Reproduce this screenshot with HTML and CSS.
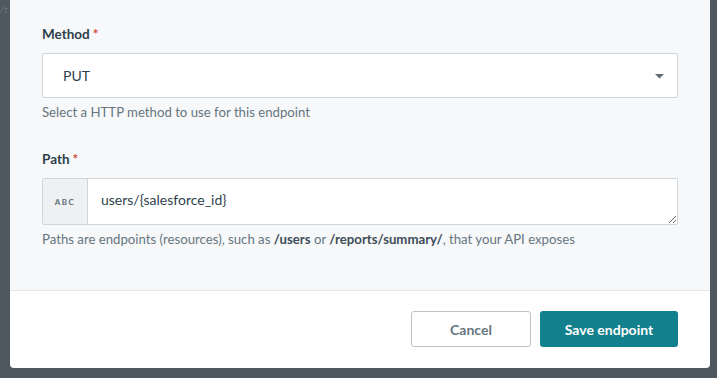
FILE: index.html
```html
<!DOCTYPE html>
<html lang="en">
  <head>
    <meta charset="UTF-8" />
    <meta name="viewport" content="width=device-width, initial-scale=1.0" />
    <title>Edit endpoint</title>
    <link rel="stylesheet" href="styles.css">
  </head>

  <body>
    <div class="backdrop">
      <div class="behind">/t</div>
      <div class="modal">
        <div class="modal_body">
          <div class="field">
            <label class="field_label">Method<span class="req">*</span></label>
            <div class="select_box">
              <span>PUT</span>
              <svg class="caret" width="9" height="5" viewBox="0 0 9 5">
                <path d="M0 0 H9 L4.5 4.5 Z" fill="#5d6b76" />
              </svg>
            </div>
            <div class="hint">Select a HTTP method to use for this endpoint</div>
          </div>

          <div class="field">
            <label class="field_label">Path<span class="req">*</span></label>
            <div class="input_group">
              <div class="addon">ABC</div>
              <textarea class="path_input" rows="1">users/{salesforce_id}</textarea>
            </div>
            <div class="hint">
              Paths are endpoints (resources), such as <b>/users</b> or
              <b>/reports/summary/</b>, that your API exposes
            </div>
          </div>
        </div>

        <div class="modal_footer">
          <button class="btn btn_cancel">Cancel</button>
          <button class="btn btn_save">Save endpoint</button>
        </div>
      </div>
    </div>
  </body>
</html>
```

FILE: styles.css
```css
html,
body {
  width: 100%;
  height: 100%;
  margin: 0;
  padding: 0;
  font-family: Lato, "Liberation Sans", sans-serif;
  background-color: #4f585e;
  overflow: hidden;
}

.backdrop {
  display: flex;
  height: 378px;
  padding: 0 7px 10px 10px;
  box-sizing: border-box;
  position: relative;
}

.behind {
  position: absolute;
  top: 3px;
  left: 0;
  color: #6d767c;
  font-size: 10px;
  font-style: italic;
}

.modal {
  width: 700px;
  display: flex;
  flex-direction: column;
  background-color: #fff;
  border-radius: 0 0 4px 4px;
  overflow: hidden;
  z-index: 1;
}

.modal_body {
  height: 291px;
  box-sizing: border-box;
  padding: 26px 32px 0;
  background-color: #f7f8fa;
  border-bottom: 1px solid #e3e6e9;
}

.field {
  margin-bottom: 31px;
}

.field_label {
  display: block;
  font-size: 13.5px;
  font-weight: 700;
  color: #2e3f4b;
  margin-bottom: 11px;
}

.req {
  color: #d2483a;
  margin-left: 3px;
}

.select_box {
  height: 45px;
  box-sizing: border-box;
  display: flex;
  align-items: center;
  justify-content: space-between;
  padding: 0 13px 0 20px;
  background-color: #fff;
  border: 1px solid #d0d5da;
  border-radius: 2px;
  font-size: 14px;
  color: #2e3f4b;
}

.caret {
  margin-top: 1px;
}

.hint {
  margin-top: 6px;
  font-size: 13.2px;
  color: #66767f;
}

.hint b {
  color: #3e4e59;
}

.input_group {
  display: flex;
  height: 45px;
  border: 1px solid #d0d5da;
  border-radius: 2px;
  background-color: #fff;
  overflow: hidden;
}

.addon {
  width: 44px;
  flex: none;
  display: flex;
  align-items: center;
  justify-content: center;
  background-color: #eef0f2;
  border-right: 1px solid #d0d5da;
  font-size: 8px;
  font-weight: 700;
  letter-spacing: 1.5px;
  color: #5d6b76;
}

.path_input {
  flex: 1;
  border: none;
  outline: none;
  resize: vertical;
  margin: 0;
  padding: 12px 13px;
  font-family: inherit;
  font-size: 14px;
  color: #2e3f4b;
  background: #fff;
}

.modal_footer {
  flex: 1;
  display: flex;
  justify-content: flex-end;
  align-items: flex-start;
  gap: 9px;
  padding: 20px 32px 0;
}

.btn {
  height: 36px;
  border-radius: 3px;
  font-family: inherit;
  font-size: 14px;
  font-weight: 700;
  cursor: pointer;
}

.btn_cancel {
  width: 120px;
  background-color: #fff;
  border: 1px solid #bcc4ca;
  color: #66767f;
}

.btn_save {
  width: 138px;
  background-color: #12808d;
  border: none;
  color: #fff;
}
```
